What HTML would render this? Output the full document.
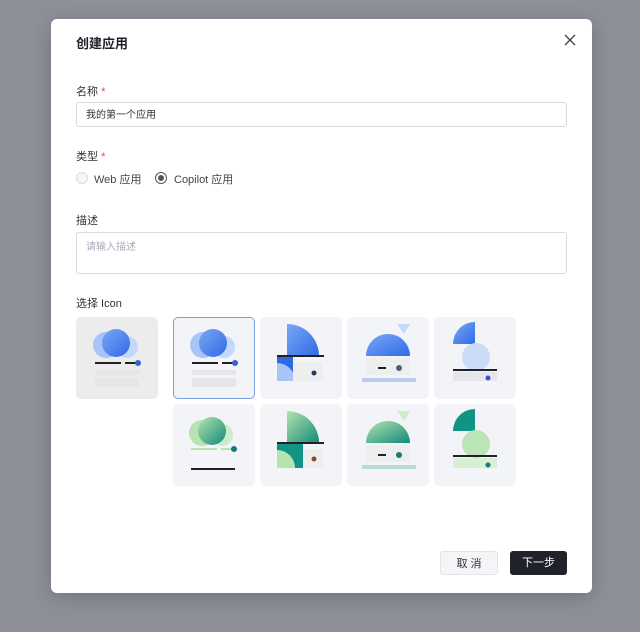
<!DOCTYPE html>
<html><head><meta charset="utf-8"><style>
*{box-sizing:border-box;margin:0;padding:0}
body{width:640px;height:632px;background:#8d9099;font-family:"Liberation Sans","Noto Sans CJK SC",sans-serif;position:relative;overflow:hidden}
.modal{position:absolute;left:51px;top:19px;width:541px;height:574px;background:#fff;border-radius:6px;box-shadow:0 4px 20px rgba(0,0,0,.2)}
.t{position:absolute;font-size:13px;color:#1f2329;font-weight:bold}
.l{position:absolute;font-size:11px;color:#333}
.l b{color:#e5484d;font-weight:normal}
.in{position:absolute;left:25px;width:491px;border:1px solid #d8dadf;border-radius:3px;font-size:10px;line-height:12px;color:#333;padding:7px 9px}
.tile{position:absolute;width:82px;height:82px;background:#f3f4f8;border-radius:5px}
.btn{position:absolute;height:24px;border-radius:3px;font-size:11px;text-align:center;line-height:24px}
</style></head><body>
<div class="modal">
<div class="t" style="left:25px;top:14px">创建应用</div>
<svg style="position:absolute;left:513px;top:15px" width="12" height="12" viewBox="0 0 12 12"><path d="M1 1L11 11M11 1L1 11" stroke="#444" stroke-width="1.4"/></svg>
<div class="l" style="left:25px;top:64px">名称 <b>*</b></div>
<div class="in" style="top:83px;height:25px">我的第一个应用</div>
<div class="l" style="left:25px;top:129px">类型 <b>*</b></div>
<div style="position:absolute;left:25px;top:153px;width:12px;height:12px;border:1px solid #ddd;border-radius:50%;background:#f5f5f5"></div>
<div class="l" style="left:43px;top:152px;font-size:11px;color:#444">Web 应用</div>
<div style="position:absolute;left:104px;top:153px;width:12px;height:12px;border:1px solid #555;border-radius:50%"><div style="margin:2px;width:6px;height:6px;border-radius:50%;background:#555"></div></div>
<div class="l" style="left:123px;top:152px;font-size:11px;color:#444">Copilot 应用</div>
<div class="l" style="left:25px;top:193px">描述</div>
<div class="in" style="top:213px;height:42px;color:#aab;padding-top:9px">请输入描述</div>
<div class="l" style="left:25px;top:276px">选择 Icon</div>
</div>
<svg width="0" height="0" style="position:absolute"><defs>
<linearGradient id="b" x1="0" y1="0" x2="1" y2="1"><stop offset="0" stop-color="#7aa8f5"/><stop offset="1" stop-color="#2f6ae6"/></linearGradient>
<linearGradient id="g" x1="0" y1="0" x2="1" y2="1"><stop offset="0" stop-color="#b6e3b0"/><stop offset="1" stop-color="#0f8a79"/></linearGradient>
</defs></svg>
<div class="tile" style="left:76px;top:317px;background:#ececec"><svg width="82" height="82"><circle cx="30" cy="28" r="13" fill="#a9c4f7"/><circle cx="51" cy="30" r="11" fill="#c6d8fa"/><circle cx="40" cy="26" r="14" fill="url(#b)"/><rect x="19" y="45" width="26" height="2" fill="#222"/><rect x="49" y="45" width="12" height="2" fill="#222"/><circle cx="62" cy="46" r="3" fill="#3563d8"/><rect x="19" y="53" width="44" height="5" fill="#e6e6e6"/><rect x="19" y="61" width="44" height="9" fill="#e6e6e6"/></svg></div>
<div class="tile" style="left:173px;top:317px;border:1.5px solid #7b9ee0"><svg width="80" height="80"><circle cx="29" cy="27" r="13" fill="#a9c4f7"/><circle cx="50" cy="29" r="11" fill="#c6d8fa"/><circle cx="39" cy="25" r="14" fill="url(#b)"/><rect x="18" y="44" width="26" height="2" fill="#222"/><rect x="48" y="44" width="12" height="2" fill="#222"/><circle cx="61" cy="45" r="3" fill="#3563d8"/><rect x="18" y="52" width="44" height="5" fill="#e6e6ea"/><rect x="18" y="60" width="44" height="9" fill="#e6e6ea"/></svg></div>
<div class="tile" style="left:260px;top:317px"><svg width="82" height="82"><path d="M27 7A32 32 0 0 1 59 39H27Z" fill="url(#b)"/><rect x="17" y="38" width="47" height="2" fill="#222"/><rect x="17" y="40" width="16" height="24" fill="#2f6ae6"/><path d="M17 46A18 18 0 0 1 35 64H17Z" fill="#a9c4f7"/><rect x="33" y="45" width="30" height="19" fill="#eee"/><circle cx="54" cy="56" r="2.5" fill="#1e3a6e"/></svg></div>
<div class="tile" style="left:347px;top:317px"><svg width="82" height="82"><path d="M19 39A22 22 0 0 1 63 39Z" fill="url(#b)"/><path d="M50 7H63L57 17Z" fill="#c6d8fa"/><rect x="19" y="41" width="44" height="17" fill="#eee"/><rect x="31" y="50" width="8" height="2" fill="#222"/><circle cx="52" cy="51" r="3" fill="#4a5d8a"/><rect x="15" y="61" width="54" height="4" fill="#b9ccf0"/></svg></div>
<div class="tile" style="left:434px;top:317px"><svg width="82" height="82"><path d="M19 27A22 22 0 0 1 41 5V27Z" fill="url(#b)"/><circle cx="42" cy="40" r="14" fill="#c6d8fa" opacity=".9"/><rect x="19" y="52" width="44" height="2" fill="#222"/><rect x="19" y="55" width="44" height="9" fill="#e6e6ea"/><circle cx="54" cy="61" r="2.5" fill="#3a4fd6"/></svg></div>
<div class="tile" style="left:173px;top:404px"><svg width="82" height="82"><circle cx="29" cy="29" r="13" fill="#b6e3b0"/><circle cx="49" cy="31" r="11" fill="#cdeccb"/><circle cx="39" cy="27" r="14" fill="url(#g)"/><rect x="18" y="44" width="26" height="2" fill="#b6e3b0"/><rect x="48" y="44" width="12" height="2" fill="#b6e3b0"/><circle cx="61" cy="45" r="3" fill="#167b70"/><rect x="18" y="64" width="44" height="2" fill="#222"/></svg></div>
<div class="tile" style="left:260px;top:404px"><svg width="82" height="82"><path d="M27 7A32 32 0 0 1 59 39H27Z" fill="url(#g)"/><rect x="17" y="38" width="47" height="2" fill="#222"/><rect x="17" y="40" width="26" height="24" fill="#119484"/><path d="M17 46A18 18 0 0 1 35 64H17Z" fill="#b6e3b0"/><rect x="43" y="45" width="20" height="19" fill="#eee"/><circle cx="54" cy="55" r="2.5" fill="#8a4b2a"/></svg></div>
<div class="tile" style="left:347px;top:404px"><svg width="82" height="82"><path d="M19 39A22 22 0 0 1 63 39Z" fill="url(#g)"/><path d="M50 7H63L57 17Z" fill="#cdeccb"/><rect x="19" y="41" width="44" height="17" fill="#eee"/><rect x="31" y="50" width="8" height="2" fill="#222"/><circle cx="52" cy="51" r="3" fill="#167b70"/><rect x="15" y="61" width="54" height="4" fill="#b6dbd4"/></svg></div>
<div class="tile" style="left:434px;top:404px"><svg width="82" height="82"><path d="M19 27A22 22 0 0 1 41 5V27Z" fill="#119484"/><circle cx="42" cy="40" r="14" fill="#b6e3b0" opacity=".9"/><rect x="19" y="51" width="44" height="2" fill="#222"/><rect x="19" y="54" width="44" height="10" fill="#d7efd2"/><circle cx="54" cy="61" r="2.5" fill="#167b70"/></svg></div>
<div class="btn" style="left:440px;top:551px;width:58px;background:#f4f5f7;border:1px solid #e2e4e8;color:#333">取 消</div>
<div class="btn" style="left:510px;top:551px;width:57px;background:#1f2329;color:#fff">下一步</div>
</body></html>
